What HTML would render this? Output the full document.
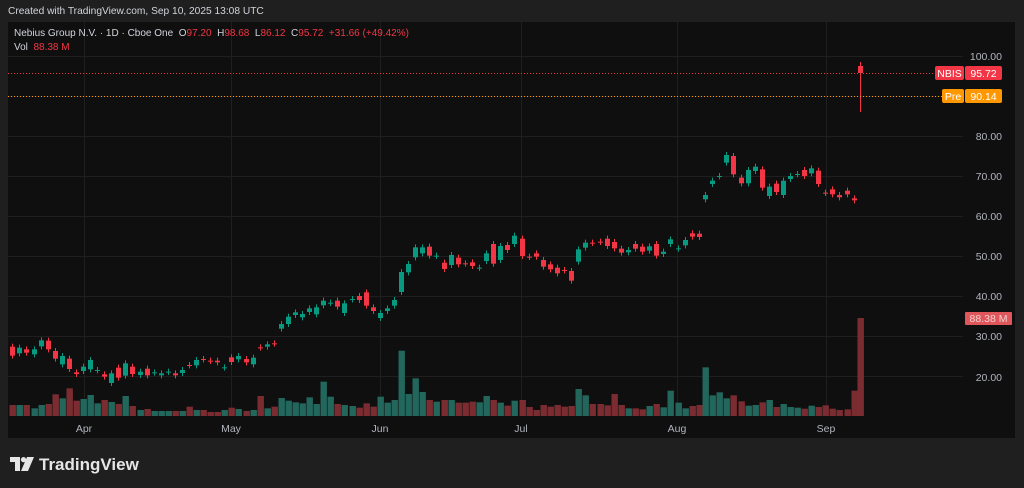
<!DOCTYPE html>
<html><head><meta charset="utf-8"><style>
html,body{margin:0;padding:0;background:#1f1f1f;width:1024px;height:488px;overflow:hidden;font-family:"Liberation Sans",sans-serif}
#c{position:absolute;left:0;top:0}
.t{position:absolute;white-space:nowrap}
</style></head><body>
<svg id="c" width="1024" height="488" xmlns="http://www.w3.org/2000/svg">
<rect x="0" y="0" width="1024" height="488" fill="#1f1f1f"/>
<rect x="8" y="22" width="1007" height="416" fill="#0f0f0f"/>
<g id="grid" stroke="#1f1f1f" stroke-width="1"></g>
<g id="vol"></g>
<g id="cand"></g>
<line x1="8" y1="73.5" x2="935" y2="73.5" stroke="#f23645" stroke-width="1" stroke-dasharray="1,2"/>
<line x1="8" y1="96.5" x2="942" y2="96.5" stroke="#ff9800" stroke-width="1" stroke-dasharray="1,2"/>
<rect x="935" y="66" width="29" height="14" rx="2" fill="#f23645"/>
<rect x="965" y="66" width="37" height="14" rx="2" fill="#f23645"/>
<rect x="942" y="89" width="22" height="14" rx="2" fill="#ff9800"/>
<rect x="965" y="89" width="37" height="14" rx="2" fill="#ff9800"/>
<rect x="965" y="312" width="47" height="13" rx="1" fill="#e0575b"/>
<g font-family="Liberation Sans, sans-serif" font-size="10.5" fill="#b2b5be">
<text x="1002" y="60" text-anchor="end">100.00</text>
<text x="1002" y="140" text-anchor="end">80.00</text>
<text x="1002" y="180" text-anchor="end">70.00</text>
<text x="1002" y="220" text-anchor="end">60.00</text>
<text x="1002" y="260" text-anchor="end">50.00</text>
<text x="1002" y="300" text-anchor="end">40.00</text>
<text x="1002" y="340" text-anchor="end">30.00</text>
<text x="1002" y="381" text-anchor="end">20.00</text>
<text x="84" y="432" text-anchor="middle">Apr</text>
<text x="231" y="432" text-anchor="middle">May</text>
<text x="380" y="432" text-anchor="middle">Jun</text>
<text x="521" y="432" text-anchor="middle">Jul</text>
<text x="677" y="432" text-anchor="middle">Aug</text>
<text x="826" y="432" text-anchor="middle">Sep</text>
</g>
<g font-family="Liberation Sans, sans-serif" font-size="10.5" fill="#ffffff">
<text x="949.5" y="77" text-anchor="middle">NBIS</text>
<text x="983.5" y="77" text-anchor="middle">95.72</text>
<text x="953" y="100" text-anchor="middle">Pre</text>
<text x="983.5" y="100" text-anchor="middle">90.14</text>
<text x="988.5" y="322" text-anchor="middle" fill="#f5d0d0">88.38 M</text>
</g>
<g transform="translate(10,457)" fill="#e6e6e6">
<path d="M0 0H10V14H5V5H0Z"/>
<circle cx="13.5" cy="2.6" r="2.6"/>
<path d="M17 0H24L18 14H11Z"/>
</g>
<text x="39" y="470" font-family="Liberation Sans, sans-serif" font-size="17" font-weight="bold" fill="#e6e6e6">TradingView</text>
</svg>
<div class="t" style="left:8px;top:6px;font-size:10.2px;color:#d1d4dc">Created with TradingView.com, Sep 10, 2025 13:08 UTC</div>
<div class="t" style="left:14px;top:28px;font-size:10px;color:#d1d4dc">Nebius Group N.V. · 1D · Cboe One&nbsp;&nbsp;O<span style="color:#f23645">97.20</span>&nbsp;&nbsp;H<span style="color:#f23645">98.68</span>&nbsp;&nbsp;L<span style="color:#f23645">86.12</span>&nbsp;&nbsp;C<span style="color:#f23645">95.72</span>&nbsp;&nbsp;<span style="color:#f23645">+31.66 (+49.42%)</span></div>
<div class="t" style="left:14px;top:42px;font-size:10px;color:#d1d4dc">Vol&nbsp;&nbsp;<span style="color:#f23645">88.38 M</span></div>
<script>
var NS="http://www.w3.org/2000/svg";
function el(p,t,a){var e=document.createElementNS(NS,t);for(var k in a)e.setAttribute(k,a[k]);p.appendChild(e);return e;}
var grid=document.getElementById('grid');
[56,96,136,176,216,256,296,336,376].forEach(function(y){el(grid,'line',{x1:8,x2:963,y1:y+0.5,y2:y+0.5});});
[84,231,380,521,677,826].forEach(function(x){el(grid,'line',{x1:x+0.5,x2:x+0.5,y1:22,y2:416});});
var A="r 200 227,g 203 220,r 208 218,g 208 223,g 181 199,r 182 208,r 213 236,g 228 253,r 236 267,r 277 282,g 260 273,g 240 268,g 270 271,r 283 290,g 280 309,r 263 293,g 250 287,r 260 282,g 275 285,r 266 286,g 277 278,g 280 286,g 275 276,r 280 286,g 270 279,r 255 256,g 240 256,r 237 238,r 242 243,r 242 247,g 262 263,r 232 246,g 228 238,r 237 247,g 233 253,r 202 203,g 193 200,r 190 191,g 132 146,g 110 132,g 97 105,g 102 112,g 85 96,g 82 103,g 62 76,g 68 69,r 62 80,g 70 99,g 57 58,r 48 60,r 37 77,r 82 93,g 99 114,g 85 93,g 60 77,g -24 36";
var Av=[375,375,375,385,375,372,343,355,325,362,357,345,370,360,366,372,348,378,390,387,393,393,393,393,393,380,390,390,396,396,390,383,387,393,390,348,385,380,354,362,367,370,352,372,305,350,372,375,378,383,370,380,350,368,360,212];
var B="g 132 157,g 82 112,g 82 100,r 80 107,g 107 108,r 128 147,g 105 135,r 113 133,r 130 131,r 127 138,g 143 144,g 100 123,r 72 131,g 78 120,r 75 90,g 47 72,r 56 108,r 110 111,r 100 110,r 120 140,r 133 148,r 143 160,r 150 151,r 153 182,g 88 125,g 68 83,r 68 69,r 65 66,r 56 78,r 66 85,r 86 98,g 90 97,r 72 86,r 80 95,g 79 92,r 72 107,g 95 102,g 58 72,g 85 86,g 60 76,r 40 50,r 41 51";
var Bv=[522,475,516,540,545,540,540,548,548,545,547,528,540,548,557,542,540,561,570,555,560,555,560,558,507,526,552,552,556,522,555,565,565,568,558,552,562,512,548,565,558,555];
var C="g 165 178,g 122 132,g 108 109,g 45 68,r 48 103,r 113 130,g 90 130,g 80 93,r 88 143,g 140 168,r 131 156,g 122 165,g 108 117,g 102 103,r 90 108,g 85 100,r 92 132,r 158 159,r 148 163,r 165 172,r 152 163,r 175 181";
var Cv=[682,766,757,775,766,784,797,795,787,780,801,792,801,803,806,797,801,796,806,810,808,752];
var cand=document.getElementById('cand'),vol=document.getElementById('vol');
function draw(x,c,t,b,vt){
  var col=c=='g'?'#089981':'#f23645';
  var vc=c=='g'?'#22665c':'#7a2c31';
  el(vol,'rect',{x:x-3,y:vt,width:6.4,height:416-vt,fill:vc});
  el(cand,'line',{x1:x,x2:x,y1:t-3,y2:b+3,stroke:col,'stroke-width':1});
  var h=Math.max(b-t,1);
  el(cand,'rect',{x:x-2.5,y:t,width:5,height:h,fill:col});
}
A.split(',').forEach(function(s,i){var p=s.split(' ');draw(Math.round((37+21.2*i)/3)+0.5,p[0],280+p[1]/3,280+p[2]/3,280+Av[i]/3);});
B.split(',').forEach(function(s,i){var j=i+5;var p=s.split(' ');draw(Math.round(370+(8+21.27*j)/3)+0.5,p[0],220+p[1]/3,220+p[2]/3,220+Bv[i]/3);});
C.split(',').forEach(function(s,i){var k=i+3;var p=s.split(' ');draw(Math.round(680+(12+21.2*k)/3)+0.5,p[0],140+p[1]/3,140+p[2]/3,140+Cv[i]/3);});
el(vol,'rect',{x:857.5,y:318,width:6.4,height:98,fill:'#7a2c31'});
el(cand,'line',{x1:860.5,x2:860.5,y1:62,y2:112,stroke:'#f23645','stroke-width':1});
el(cand,'rect',{x:858,y:66,width:5,height:7,fill:'#f23645'});
</script>
</body></html>
